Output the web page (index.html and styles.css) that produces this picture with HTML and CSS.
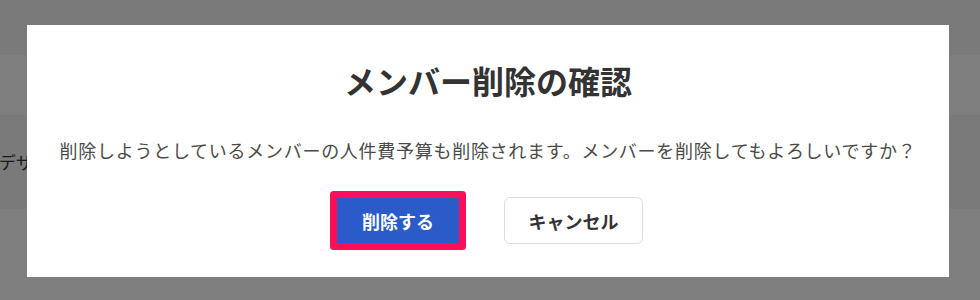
FILE: index.html
```html
<!DOCTYPE html>
<html>
    <head>
        <title>メンバー削除の確認</title>
        <meta charset="UTF-8">
        <meta name="viewport" content="width=device-width, initial-scale=1.0">
        <link rel="stylesheet" href="styles.css">
    </head>
    <body>
        <div class="pagina">
            <div class="fila fila-gris"></div>
            <div class="fila fila-blanca"></div>
            <div class="fila fila-gris fila-alta">
                <span class="celda">デザ</span>
            </div>
            <div class="fila fila-blanca"></div>
        </div>

        <div class="fondo-modal">
            <div class="modal">
                <h2 class="modal-titulo">メンバー削除の確認</h2>
                <p class="modal-texto">削除しようとしているメンバーの人件費予算も削除されます。メンバーを削除してもよろしいですか？</p>
                <div class="modal-botones">
                    <button type="button" class="btn-borrar">削除する</button>
                    <button type="button" class="btn-cancelar">キャンセル</button>
                </div>
            </div>
        </div>
    </body>
</html>
```

FILE: styles.css
```css
body{
    margin: 0;
    font-family: "Noto Sans CJK JP", "Noto Sans", sans-serif;
    overflow: hidden;
}

/* pagina de fondo */
.pagina{
    width: 980px;
    height: 300px;
}
.fila{
    height: 60px;
    display: flex;
    align-items: center;
}
.fila-gris{
    background: #f4f4f4;
    height: 55px;
}
.fila-alta{
    height: 94px;
}
.fila-blanca{
    background: #ffffff;
    height: 60px;
}
.fila-blanca:last-child{
    height: 91px;
}
.celda{
    margin-left: -1px;
    margin-top: -2px;
    font-size: 17px;
    color: #333;
    white-space: nowrap;
}

/* ventana */
.fondo-modal{
    position: absolute;
    left: 0;
    top: 0;
    right: 0;
    bottom: 0;
    background: rgba(0,0,0,0.5);
    padding: 25px 0 0 27px;
}
.modal{
    width: 922px;
    height: 252px;
    box-sizing: border-box;
    background: #fff;
    text-align: center;
    padding-top: 31px;
}
.modal-titulo{
    margin: 0;
    font-size: 32px;
    line-height: 48px;
    font-weight: bold;
    color: #333;
}
.modal-texto{
    margin: 33px 0 0 0;
    font-size: 18px;
    line-height: 27px;
    letter-spacing: 0.04em;
    color: #4a4a4a;
}
.modal-botones{
    margin-top: 33px;
    display: flex;
    justify-content: center;
    align-items: center;
    gap: 45px;
    padding-left: 4px;
}
.modal-botones button{
    font-family: "Noto Sans CJK JP", "Noto Sans", sans-serif;
    font-size: 18px;
    font-weight: bold;
    cursor: pointer;
}
.btn-borrar{
    width: 122px;
    height: 45px;
    border: none;
    border-radius: 1px;
    background: #2a5bc8;
    color: #fff;
    box-shadow: 0 0 0 7px #fc0f5a;
}
.btn-cancelar{
    width: 139px;
    height: 47px;
    border: 1px solid #dcdcdc;
    border-radius: 6px;
    background: #fff;
    color: #333;
}
```
